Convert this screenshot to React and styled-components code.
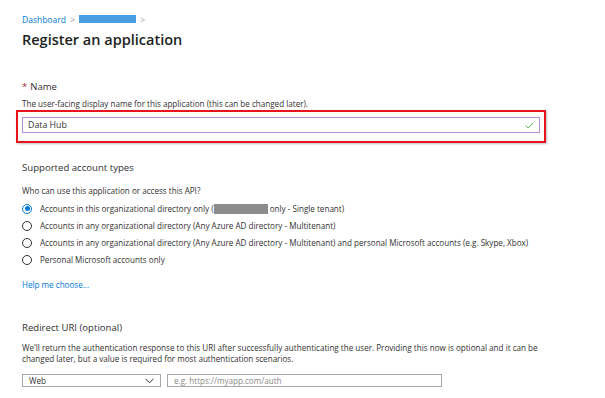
import React from "react";
import styled, { createGlobalStyle } from "styled-components";

const GlobalStyle = createGlobalStyle`
  html, body {
    margin: 0;
    padding: 0;
    background: #fff;
  }
  body {
    font-family: "Open Sans", "Noto Sans", sans-serif;
    color: #323130;
  }
`;

const Page = styled.div`
  width: 605px;
  height: 398px;
  overflow: hidden;
  padding: 12px 0 0 22px;
  box-sizing: border-box;
`;

const Breadcrumb = styled.div`
  display: flex;
  align-items: center;
  gap: 3px;
  height: 14px;
  font-size: 8.5px;
`;

const Crumb = styled.a`
  color: #0078d4;
  text-decoration: none;
`;

const Redacted = styled.span`
  display: inline-block;
  width: ${(p) => p.w}px;
  height: ${(p) => p.h}px;
  background: ${(p) => p.color};
  vertical-align: middle;
`;

const Sep = styled.span`
  color: #a19f9d;
  font-size: 9px;
  margin: 0 1px;
`;

const Title = styled.h1`
  margin: 4px 0 0;
  font-size: 14.5px;
  font-weight: 600;
  line-height: 20px;
  color: #201f1e;
`;

const Section = styled.section`
  margin-top: ${(p) => p.top}px;
`;

const Label = styled.div`
  font-size: 9.5px;
  line-height: 14px;
  color: #323130;
`;

const Required = styled.span`
  color: #a4262c;
  margin-right: 3px;
`;

const Heading = styled.h2`
  margin: 0;
  font-size: 9.6px;
  font-weight: 400;
  line-height: 14px;
  color: #323130;
`;

const Help = styled.p`
  margin: ${(p) => p.top || 0}px 0 0;
  font-size: 8.1px;
  line-height: 11px;
  color: #323130;
  width: ${(p) => p.width || "auto"};
`;

const Highlight = styled.div`
  margin: 1px 0 0 -6px;
  width: 530px;
  box-sizing: border-box;
  border: 2px solid #e8141c;
  padding: 5px 4px 8px 4px;
  box-shadow: 1px 1px 2px rgba(0, 0, 0, 0.25);
`;

const TextField = styled.div`
  display: flex;
  align-items: center;
  height: 16px;
  box-sizing: border-box;
  border: 1px solid #b98bd8;
  padding: 0 5px;
  font-size: 8.8px;
  color: #323130;
`;

const Check = styled.svg`
  margin-left: auto;
`;

const RadioList = styled.div`
  display: flex;
  flex-direction: column;
  gap: 6px;
  margin-top: 7px;
`;

const RadioRow = styled.label`
  display: flex;
  align-items: center;
  gap: 8px;
  height: 11px;
  font-size: 8.1px;
  color: #323130;
`;

const RadioCircle = styled.span`
  width: 10px;
  height: 10px;
  box-sizing: border-box;
  border-radius: 50%;
  border: 1px solid ${(p) => (p.checked ? "#0078d4" : "#323130")};
  display: flex;
  align-items: center;
  justify-content: center;
  flex: none;
  &::after {
    content: "";
    width: 5px;
    height: 5px;
    border-radius: 50%;
    background: ${(p) => (p.checked ? "#0078d4" : "transparent")};
  }
`;

const Link = styled.a`
  display: block;
  margin-top: 14px;
  font-size: 8.1px;
  line-height: 11px;
  color: #0078d4;
  text-decoration: none;
`;

const UriRow = styled.div`
  display: flex;
  gap: 6px;
  margin-top: 10px;
`;

const Select = styled.div`
  width: 139px;
  height: 13px;
  box-sizing: border-box;
  border: 1px solid #aaa8a6;
  display: flex;
  align-items: center;
  justify-content: space-between;
  padding: 0 6px;
  font-size: 8.1px;
`;

const UriInput = styled.div`
  width: 275px;
  height: 13px;
  box-sizing: border-box;
  border: 1px solid #aaa8a6;
  display: flex;
  align-items: center;
  padding: 0 6px;
  font-size: 8.1px;
  color: #8a8886;
`;

const radios = [
  { checked: true, text: "single" },
  { text: "Accounts in any organizational directory (Any Azure AD directory - Multitenant)" },
  {
    text: "Accounts in any organizational directory (Any Azure AD directory - Multitenant) and personal Microsoft accounts (e.g. Skype, Xbox)",
  },
  { text: "Personal Microsoft accounts only" },
];

export default function App() {
  return (
    <Page>
      <GlobalStyle />
      <Breadcrumb>
        <Crumb>Dashboard</Crumb>
        <Sep>&gt;</Sep>
        <Redacted w={57} h={8} color="#4a9ee2" />
        <Sep>&gt;</Sep>
      </Breadcrumb>
      <Title>Register an application</Title>

      <Section top={30}>
        <Label>
          <Required>*</Required>Name
        </Label>
        <Help top={4}>
          The user-facing display name for this application (this can be changed later).
        </Help>
        <Highlight>
          <TextField>
            Data Hub
            <Check width="9" height="7" viewBox="0 0 9 7">
              <path d="M0.8 3.6 L3.2 6 L8.2 0.8" fill="none" stroke="#5ba84a" strokeWidth="1" />
            </Check>
          </TextField>
        </Highlight>
      </Section>

      <Section top={18}>
        <Heading>Supported account types</Heading>
        <Help top={10}>Who can use this application or access this API?</Help>
        <RadioList>
          {radios.map((r, i) => (
            <RadioRow key={i}>
              <RadioCircle checked={r.checked} />
              {r.text === "single" ? (
                <span>
                  Accounts in this organizational directory only (
                  <Redacted w={54} h={10} color="#8c8c8c" /> only - Single tenant)
                </span>
              ) : (
                <span>{r.text}</span>
              )}
            </RadioRow>
          ))}
        </RadioList>
        <Link>Help me choose...</Link>
      </Section>

      <Section top={31}>
        <Heading>Redirect URI (optional)</Heading>
        <Help top={7} width="530px">
          We'll return the authentication response to this URI after successfully authenticating the
          user. Providing this now is optional and it can be changed later, but a value is required
          for most authentication scenarios.
        </Help>
        <UriRow>
          <Select>
            Web
            <svg width="9" height="6" viewBox="0 0 9 6">
              <path d="M0.5 0.8 L4.5 4.8 L8.5 0.8" fill="none" stroke="#323130" strokeWidth="1" />
            </svg>
          </Select>
          <UriInput>e.g. https://myapp.com/auth</UriInput>
        </UriRow>
      </Section>
    </Page>
  );
}
